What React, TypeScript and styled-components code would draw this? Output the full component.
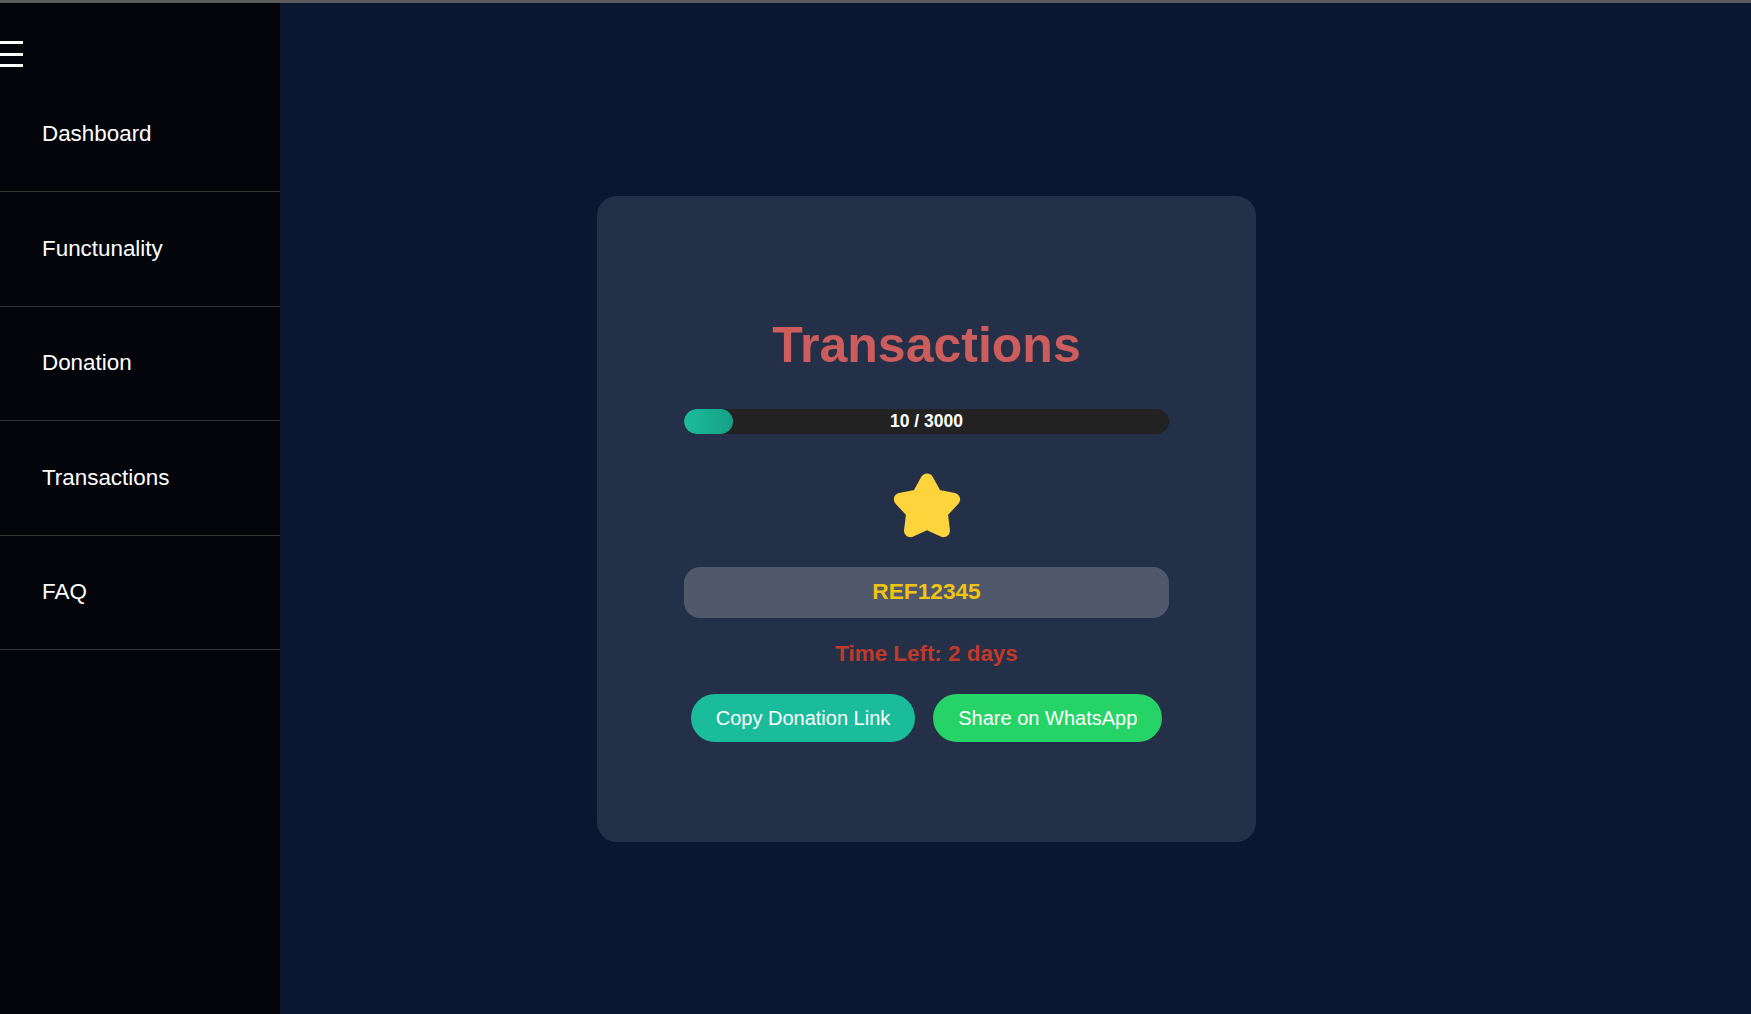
import styled, { createGlobalStyle } from "styled-components";

const GlobalStyle = createGlobalStyle`
	* {
		box-sizing: border-box;
	}

	body {
		margin: 0;
		background: #0b1730;
		font-family: "Liberation Sans", Arial, sans-serif;
	}
`;

const menuItems = ["Dashboard", "Functunality", "Donation", "Transactions", "FAQ"];

const raised = 10;
const goal = 3000;

function App() {
	// keep a visible stub of fill even at tiny progress
	const fill = Math.max((raised / goal) * 100, 10);

	return (
		<>
			<GlobalStyle />
			<Layout>
				<Sidebar>
					<MenuToggle>
						<Bar />
						<Bar />
						<Bar />
					</MenuToggle>
					<nav>
						{menuItems.map((item) => (
							<NavItem key={item}>{item}</NavItem>
						))}
					</nav>
				</Sidebar>
				<Main>
					<Card>
						<Title>Transactions</Title>
						<Track>
							<Fill style={{ width: `${fill}%` }} />
							<TrackLabel>
								{raised} / {goal}
							</TrackLabel>
						</Track>
						<StarIcon viewBox="-34 -36 68 66" aria-hidden="true">
							<polygon
								points={starPoints(28, 15)}
								fill="#fdd43c"
								stroke="#fdd43c"
								strokeWidth="13"
								strokeLinejoin="round"
							/>
						</StarIcon>
						<RefCode>REF12345</RefCode>
						<TimeLeft>Time Left: 2 days</TimeLeft>
						<Actions>
							<ActionButton $tone="#1abc9c">Copy Donation Link</ActionButton>
							<ActionButton $tone="#25d366">Share on WhatsApp</ActionButton>
						</Actions>
					</Card>
				</Main>
			</Layout>
		</>
	);
}

function starPoints(outer: number, inner: number) {
	const pts: string[] = [];
	for (let i = 0; i < 10; i++) {
		const r = i % 2 === 0 ? outer : inner;
		const a = (Math.PI / 5) * i - Math.PI / 2;
		pts.push(`${(r * Math.cos(a)).toFixed(2)},${(r * Math.sin(a)).toFixed(2)}`);
	}
	return pts.join(" ");
}

const Layout = styled.div`
	display: flex;
	height: 100vh;
	border-top: 3px solid #5a5a5a;
`;

const Sidebar = styled.aside`
	width: 280px;
	flex-shrink: 0;
	background: #03050a;
	display: flex;
	flex-direction: column;
`;

const MenuToggle = styled.div`
	height: 74.5px;
	padding-top: 38px;
	display: flex;
	flex-direction: column;
	gap: 8.5px;
`;

const Bar = styled.span`
	display: block;
	width: 23px;
	height: 3px;
	background: #fff;
`;

const NavItem = styled.div`
	height: 114.5px;
	display: flex;
	align-items: center;
	padding-left: 42px;
	border-bottom: 1px solid #363636;
	color: #fff;
	font-size: 22.4px;
`;

const Main = styled.main`
	flex: 1;
	display: flex;
	justify-content: center;
	align-items: flex-start;
	padding: 193px 178px 0 0;
`;

const Card = styled.section`
	width: 659px;
	padding: 120px 87px 100px;
	border-radius: 20px;
	background: #243047;
	display: flex;
	flex-direction: column;
	align-items: center;
`;

const Title = styled.h1`
	margin: 0;
	font-size: 50px;
	line-height: 58px;
	font-weight: 700;
	color: #cd5c5c;
`;

const Track = styled.div`
	position: relative;
	width: 100%;
	height: 25px;
	margin-top: 35px;
	border-radius: 13px;
	background: #222;
	overflow: hidden;
`;

const Fill = styled.div`
	height: 100%;
	border-radius: 13px;
	background: linear-gradient(90deg, #1abc9c, #16a085);
`;

const TrackLabel = styled.span`
	position: absolute;
	inset: 0;
	display: flex;
	align-items: center;
	justify-content: center;
	color: #fff;
	font-size: 17.5px;
	font-weight: 700;
`;

const StarIcon = styled.svg`
	width: 68px;
	height: 66px;
	margin-top: 38px;
	display: block;
`;

const RefCode = styled.div`
	width: 100%;
	height: 51px;
	margin-top: 29px;
	border-radius: 16px;
	background: rgba(255, 255, 255, 0.2);
	display: flex;
	align-items: center;
	justify-content: center;
	padding-bottom: 2px;
	color: #f1c40f;
	font-size: 22.7px;
	font-weight: 700;
`;

const TimeLeft = styled.p`
	margin: 23px 0 0;
	font-size: 22.4px;
	line-height: 26px;
	font-weight: 700;
	color: #c0392b;
`;

const Actions = styled.div`
	display: flex;
	gap: 18px;
	margin-top: 27px;
`;

const ActionButton = styled.button<{ $tone: string }>`
	height: 48px;
	padding: 0 25px;
	border: none;
	border-radius: 24px;
	background: ${({ $tone }) => $tone};
	color: #fff;
	font-family: inherit;
	font-size: 20px;
	cursor: pointer;
`;

export default App;
